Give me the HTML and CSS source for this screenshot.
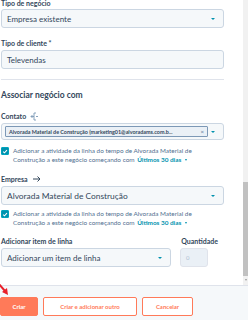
FILE: index.html
```html
<!DOCTYPE html>
<html lang="pt">
<head>
  <meta charset="UTF-8" />
  <title>Criar negócio</title>
  <link rel="stylesheet" href="styles.css">
</head>
<body>
  <div class="panel">
    <div class="scroll-area">
      <div class="form">
        <!-- tipo de negócio -->
        <div class="label first">Tipo de negócio</div>
        <div class="select"><span>Empresa existente</span><span class="caret"></span></div>

        <div class="label gap-10">Tipo de cliente *</div>
        <div class="input">Televendas</div>

        <div class="divider"></div>

        <div class="heading">Associar negócio com</div>

        <!-- contato -->
        <div class="label gap-10">Contato
          <svg class="label-icon" width="9" height="9" viewBox="0 0 9 9"><path d="M6 1H4v7h2M4 4.5H1M2.5 3 1 4.5 2.5 6M6 4.5h2" fill="none" stroke="#7c98b6" stroke-width="0.9"/></svg>
        </div>
        <div class="select tags">
          <div class="tag"><span class="tag-text">Alvorada Material de Construção (marketing01@alvoradams.com.b...</span><span class="tag-x">×</span></div>
          <span class="caret"></span>
        </div>
        <div class="check-row">
          <span class="checkbox"><svg width="7" height="7" viewBox="0 0 7 7"><path d="M1.3 3.6 2.9 5.1 5.8 1.8" fill="none" stroke="#fff" stroke-width="1.2"/></svg></span>
          <p>Adicionar a atividade da linha do tempo de Alvorada Material de Construção a este negócio começando com <b>Últimos 30 dias</b><i class="mini-caret"></i></p>
        </div>

        <!-- empresa -->
        <div class="label gap-10">Empresa
          <svg class="label-icon" width="10" height="8" viewBox="0 0 10 8"><path d="M1 4h7M5.5 1.5 8 4 5.5 6.5" fill="none" stroke="#33475b" stroke-width="1"/></svg>
        </div>
        <div class="select big"><span>Alvorada Material de Construção</span><span class="caret"></span></div>
        <div class="check-row tight">
          <span class="checkbox"><svg width="7" height="7" viewBox="0 0 7 7"><path d="M1.3 3.6 2.9 5.1 5.8 1.8" fill="none" stroke="#fff" stroke-width="1.2"/></svg></span>
          <p>Adicionar a atividade da linha do tempo de Alvorada Material de Construção a este negócio começando com <b>Últimos 30 dias</b><i class="mini-caret"></i></p>
        </div>

        <!-- item de linha -->
        <div class="item-row">
          <div class="item-col">
            <div class="label">Adicionar item de linha</div>
            <div class="select"><span>Adicionar um item de linha</span><span class="caret"></span></div>
          </div>
          <div class="qty-col">
            <div class="label">Quantidade</div>
            <div class="qty">0</div>
          </div>
        </div>
      </div>
      <div class="scrollbar">
        <div class="thumb"></div>
        <div class="arrow-down"></div>
      </div>
    </div>

    <div class="footer">
      <button class="btn primary">Criar</button>
      <button class="btn secondary wide">Criar e adicionar outro</button>
      <button class="btn secondary">Cancelar</button>
      <svg class="pointer" width="12" height="14" viewBox="0 0 12 14"><path d="M0 1 6 8" stroke="#e8202a" stroke-width="2"/><path d="M3 9 9 12 8 5Z" fill="#e8202a"/></svg>
    </div>
  </div>
</body>
</html>
```

FILE: styles.css
```css
html, body {
  margin: 0;
  padding: 0;
  background: #fff;
  font-family: "Lato", "Liberation Sans", sans-serif;
  color: #33475b;
  overflow: hidden;
}
.panel {
  width: 248px;
  height: 320px;
  display: flex;
  flex-direction: column;
  position: relative;
}

/* área com rolagem */
.scroll-area {
  height: 285px;
  display: flex;
  overflow: hidden;
}
.form {
  flex: 1;
  padding: 0 19px 0 1px;
  min-width: 0;
}
.scrollbar {
  width: 5px;
  background: #f1f1f1;
  display: flex;
  flex-direction: column;
  justify-content: flex-end;
  align-items: center;
}
.thumb {
  align-self: stretch;
  height: 94px;
  background: #c1c1c1;
  margin-bottom: 3px;
}
.arrow-down {
  width: 0;
  height: 0;
  margin-bottom: 4px;
  border-left: 1.5px solid transparent;
  border-right: 1.5px solid transparent;
  border-top: 2px solid #999;
}

/* rótulos */
.label {
  font-size: 7px;
  font-weight: bold;
  line-height: 10px;
  height: 10px;
  margin-bottom: 2px;
  display: flex;
  align-items: center;
  gap: 4px;
  white-space: nowrap;
}
.label.first {
  margin-top: -2px;
  margin-bottom: 1px;
}
.gap-10 { margin-top: 10px; }
.label-icon { display: block; }

.select, .input {
  height: 17px;
  background: #f5f8fa;
  border: 1px solid #cbd6e2;
  border-radius: 3px;
  display: flex;
  align-items: center;
  justify-content: space-between;
  padding: 0 8px 0 5px;
  font-size: 8px;
  color: #33475b;
}
.select.big { font-size: 8.4px; }
.caret {
  width: 0;
  height: 0;
  border-left: 2.5px solid transparent;
  border-right: 2.5px solid transparent;
  border-top: 2.5px solid #0091ae;
}

.divider {
  height: 1px;
  background: #dfe3eb;
  margin-top: 10px;
}
.heading {
  margin-top: 9px;
  font-size: 8.5px;
  font-weight: bold;
  line-height: 12px;
  color: #33475b;
}

/* contato com tag */
.select.tags {
  height: 15px;
  padding: 0 8px 0 3px;
}
.tag {
  flex: 1;
  height: 9px;
  margin-right: 3px;
  background: #eaf0f6;
  border: 1px solid #7c98b6;
  border-radius: 1px;
  display: flex;
  align-items: center;
  justify-content: space-between;
  padding: 0 3px;
  font-size: 5.4px;
  font-weight: bold;
  color: #33475b;
  white-space: nowrap;
  overflow: hidden;
}
.tag-x {
  font-size: 6px;
  font-weight: normal;
  color: #516f90;
}

/* checkbox */
.check-row {
  display: flex;
  gap: 4px;
  margin-top: 6px;
}
.check-row.tight { margin-top: 4px; }
.checkbox {
  flex: none;
  width: 6px;
  height: 6px;
  margin-top: 1px;
  background: #0091ae;
  border: 0.5px solid #00a4bd;
  border-radius: 1px;
  display: flex;
  align-items: center;
  justify-content: center;
}
.check-row p {
  margin: 0;
  font-size: 6.4px;
  line-height: 9px;
  color: #516f90;
}
.check-row b {
  color: #0091ae;
  margin-left: 1px;
}
.mini-caret {
  display: inline-block;
  width: 0;
  height: 0;
  margin-left: 4px;
  vertical-align: 1px;
  border-left: 1.5px solid transparent;
  border-right: 1.5px solid transparent;
  border-top: 2px solid #0091ae;
}

/* item de linha */
.item-row {
  display: flex;
  gap: 9px;
  margin-top: 9px;
}
.item-col { width: 170px; }
.qty-col { width: 28px; }
.qty-col .label { justify-content: flex-end; margin-right: -10px; }
.qty {
  height: 17px;
  background: #eaf0f6;
  border: 1px solid #dfe3eb;
  border-radius: 3px;
  font-size: 6px;
  color: #b0c1d4;
  display: flex;
  align-items: center;
  padding-left: 5px;
}

/* rodapé */
.footer {
  flex: 1;
  background: #f5f8fa;
  border-top: 1px solid #dfe3eb;
  display: flex;
  align-items: flex-start;
  gap: 5px;
  padding-top: 11px;
  position: relative;
}
.btn {
  height: 19px;
  font-family: "Lato", "Liberation Sans", sans-serif;
  font-size: 6px;
  font-weight: bold;
  border-radius: 2px;
  padding: 0;
  box-sizing: border-box;
}
.btn.primary {
  width: 38px;
  background: #ff7a59;
  border: 1px solid #ff7a59;
  color: #fff;
}
.btn.secondary {
  width: 51px;
  background: #fff;
  border: 1px solid #ff7a59;
  color: #ff7a59;
}
.btn.secondary.wide { width: 94px; }
.pointer {
  position: absolute;
  left: -1px;
  top: -3px;
}
```
